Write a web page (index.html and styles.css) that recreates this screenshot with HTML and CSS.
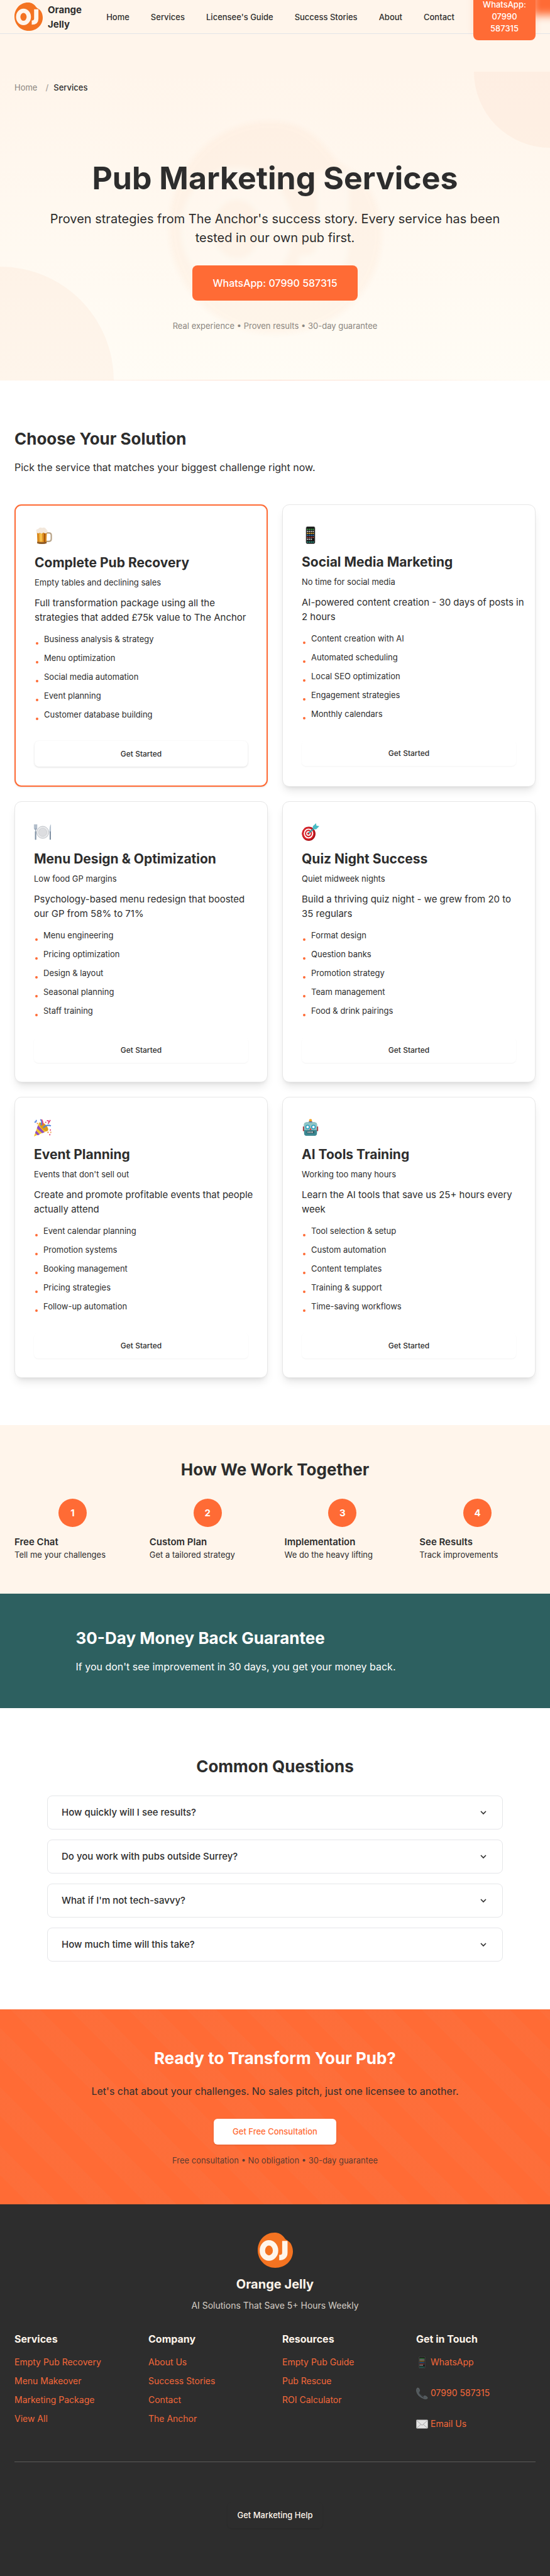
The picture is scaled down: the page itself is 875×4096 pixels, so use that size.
FILE: index.html
```html
<!DOCTYPE html>
<html lang="en">
<head>
<meta charset="utf-8">
<meta name="viewport" content="width=device-width, initial-scale=1">
<title>Pub Marketing Services | Orange Jelly</title>
<link rel="stylesheet" href="styles.css">
</head>
<body>
<svg class="defs" aria-hidden="true" width="0" height="0">
  <symbol id="logo" viewBox="0 0 144 144">
    <path fill="#f47321" d="M68 0C88 0 100 8 112 25C118 32 130 34 137 48C142 58 144 68 144 78C143 116 112 144 72 144C32 144 0 112 0 72C0 32 30 0 68 0Z"/>
    <g fill="none" stroke="#fff5eb" stroke-width="22">
      <ellipse cx="46" cy="73" rx="27" ry="31"/>
      <path stroke="#f47321" stroke-width="30" d="M111 82Q111 102 92 102"/>
      <path stroke-linejoin="round" d="M111 34V82Q111 102 88 102"/>
    </g>
  </symbol>
  <symbol id="phone" viewBox="0 0 30 30">
    <rect x="7.5" y="0.5" width="15" height="29" rx="2.2" fill="#151515" stroke="#666" stroke-width="0.8"/>
    <g stroke-width="2" stroke-dasharray="2 1.2">
      <path stroke="#4fc45c" d="M9 5h12"/><path stroke="#e8e8e8" d="M9 8.4h12"/><path stroke="#f0b43c" d="M9 11.8h12"/>
      <path stroke="#3d8fe0" d="M9 15.2h12"/><path stroke="#d9534f" d="M9 18.6h12"/><path stroke="#ddd" d="M9 22h9"/><path stroke="#2fb7a0" d="M9 26.6h12"/>
    </g>
  </symbol>
</svg>

<header class="header">
  <span class="glow" aria-hidden="true"></span>
  <a class="brand" href="#"><svg class="brand-logo" aria-hidden="true"><use href="#logo"/></svg><span>Orange<br>Jelly</span></a>
  <nav class="nav" aria-label="Main">
    <a href="#">Home</a><a href="#">Services</a><a href="#">Licensee's Guide</a><a href="#">Success Stories</a><a href="#">About</a><a href="#">Contact</a>
  </nav>
  <a class="header-cta" href="#">WhatsApp: 07990 587315</a>
</header>

<main>
<section class="hero">
  <span class="disc disc-right" aria-hidden="true"></span>
  <span class="disc disc-left" aria-hidden="true"></span>
  <svg class="watermark" aria-hidden="true"><use href="#logo"/></svg>
  <nav class="crumbs" aria-label="Breadcrumb"><a href="#">Home</a><span class="slash">/</span><span>Services</span></nav>
  <div class="hero-body">
    <h1>Pub Marketing Services</h1>
    <p class="hero-lead">Proven strategies from The Anchor's success story. Every service has been tested in our own pub first.</p>
    <a class="hero-cta" href="#">WhatsApp: 07990 587315</a>
    <p class="hero-note">Real experience • Proven results • 30-day guarantee</p>
  </div>
</section>

<section class="services">
  <h2>Choose Your Solution</h2>
  <p class="lead">Pick the service that matches your biggest challenge right now.</p>
  <div class="cards">
    <article class="card featured">
      <svg class="emoji" viewBox="0 0 30 30" aria-hidden="true">
        <path d="M20 10h4.500q4 0 4 4v6q0 4-4 4.500H20" fill="none" stroke="#b9a58a" stroke-width="2.400"/>
        <path d="M4 7h17l-.800 20.500q-7.700 2.500-15.400 0Z" fill="#d98a1f"/><path d="M8 11h5l.500 14h-5Z" fill="#f6bf4a"/><path d="M16 10h2.500L18 26h-2Z" fill="#a8570d"/>
        <path d="M4.500 25q8 2 16 0v2.800q-8 2.200-16 0Z" fill="#8a5a2a"/>
        <path d="M3.500 9Q1 4 6 3.500Q9-.500 13 1.500Q18-.500 20 4Q23.500 6 21 10Q18 12 15 9.500Q12 12.500 9 10Q6 12 3.500 9Z" fill="#f3e8dc"/>
      </svg>
      <h3>Complete Pub Recovery</h3>
      <p class="problem">Empty tables and declining sales</p>
      <p class="desc">Full transformation package using all the strategies that added £75k value to The Anchor</p>
      <ul><li>Business analysis &amp; strategy</li><li>Menu optimization</li><li>Social media automation</li><li>Event planning</li><li>Customer database building</li></ul>
      <a class="start" href="#">Get Started</a>
    </article>
    <article class="card">
      <svg class="emoji" aria-hidden="true"><use href="#phone"/></svg>
      <h3>Social Media Marketing</h3>
      <p class="problem">No time for social media</p>
      <p class="desc">AI-powered content creation - 30 days of posts in 2&nbsp;hours</p>
      <ul><li>Content creation with AI</li><li>Automated scheduling</li><li>Local SEO optimization</li><li>Engagement strategies</li><li>Monthly calendars</li></ul>
      <a class="start" href="#">Get Started</a>
    </article>
    <article class="card">
      <svg class="emoji" viewBox="0 0 30 30" aria-hidden="true">
        <circle cx="15" cy="15.500" r="10.300" fill="#e9eaec" stroke="#b9bdc3"/><circle cx="15" cy="15.500" r="7" fill="#dcdde0" stroke="#c3c6ca" stroke-width=".7"/>
        <path d="M.800 2v6q0 2.500 2 2.500t2-2.500V2M2.800 2v26" fill="none" stroke="#8fa0b3" stroke-width="1.300"/><path d="M2.800 14v14" stroke="#7f90a3" stroke-width="2.200"/>
        <path d="M29 1.500q-3 3-2.500 14h2.500Z" fill="#b3c1d0"/><path d="M27.800 14v14" stroke="#7f90a3" stroke-width="2.200"/>
      </svg>
      <h3>Menu Design &amp; Optimization</h3>
      <p class="problem">Low food GP margins</p>
      <p class="desc">Psychology-based menu redesign that boosted our GP from 58% to 71%</p>
      <ul><li>Menu engineering</li><li>Pricing optimization</li><li>Design &amp; layout</li><li>Seasonal planning</li><li>Staff training</li></ul>
      <a class="start" href="#">Get Started</a>
    </article>
    <article class="card">
      <svg class="emoji" viewBox="0 0 30 30" aria-hidden="true">
        <ellipse cx="12" cy="18" rx="11.500" ry="12" fill="#a80f16"/><ellipse cx="11" cy="17.500" rx="10.500" ry="11" fill="#d8232a"/>
        <ellipse cx="11.500" cy="17.500" rx="8" ry="8.500" fill="#fff"/><ellipse cx="11.500" cy="17.500" rx="6" ry="6.500" fill="#d8232a"/><ellipse cx="11.500" cy="17.500" rx="3.800" ry="4" fill="#fff"/><circle cx="11.500" cy="17.500" r="2" fill="#d8232a"/>
        <path d="M12 17L24 6" stroke="#2c98a0" stroke-width="2.200"/><path d="M19 10L19 5L24.500 0L25 4L30 5L24.500 10.500Z" fill="#48bcc4"/>
      </svg>
      <h3>Quiz Night Success</h3>
      <p class="problem">Quiet midweek nights</p>
      <p class="desc">Build a thriving quiz night - we grew from 20 to 35&nbsp;regulars</p>
      <ul><li>Format design</li><li>Question banks</li><li>Promotion strategy</li><li>Team management</li><li>Food &amp; drink pairings</li></ul>
      <a class="start" href="#">Get Started</a>
    </article>
    <article class="card">
      <svg class="emoji" viewBox="0 0 30 30" aria-hidden="true">
        <path d="M0 30L9 6Q19 9 24 20Z" fill="#f2c230"/><path d="M7 11L18 23L14 24.500L5 16ZM3.500 20L10 26.500L6.500 28L2 24Z" fill="#8f4fc0"/>
        <ellipse cx="17" cy="13.500" rx="4.500" ry="9.500" transform="rotate(-45 17 13.500)" fill="#d99b1c"/>
        <path d="M12 11Q15 5 11 1M1 5q3 2 3-3M16 15q6-6 13-3" fill="none" stroke="#4a7fe0" stroke-width="1.900"/>
        <path d="M15 11q1-6-2-10M22 3q5 0 3 4q-2 3 3-5" fill="none" stroke="#e0447c" stroke-width="1.900"/>
        <path d="M19 5h2v2h-2ZM27 18h2v2h-2ZM26 26h2v2h-2Z" fill="#e0447c"/><path d="M23 22h2v2h-2ZM5 7h2v2h-2ZM28 22h1.500v2H28Z" fill="#f08c2e"/>
      </svg>
      <h3>Event Planning</h3>
      <p class="problem">Events that don't sell out</p>
      <p class="desc">Create and promote profitable events that people actually attend</p>
      <ul><li>Event calendar planning</li><li>Promotion systems</li><li>Booking management</li><li>Pricing strategies</li><li>Follow-up automation</li></ul>
      <a class="start" href="#">Get Started</a>
    </article>
    <article class="card">
      <svg class="emoji" viewBox="0 0 30 30" aria-hidden="true">
        <circle cx="15" cy="3" r="2.600" fill="#f5a623"/><rect x="12" y="4.500" width="6" height="3" fill="#4a4f9a"/>
        <path d="M2 13h3v8H2ZM25 13h3v8h-3Z" fill="#b5343a"/><path d="M4 10Q4 6 9 6H21Q26 6 26 10V24Q26 29 21 29H9Q4 29 4 24Z" fill="#3c8791"/><path d="M4 10Q4 6 9 6H21Q26 6 26 10V19H4Z" fill="#8fc4c4"/>
        <circle cx="10" cy="14" r="3.800" fill="#2a9fc0"/><circle cx="20" cy="14" r="3.800" fill="#2a9fc0"/><circle cx="10" cy="14" r="2.200" fill="#fff"/><circle cx="20" cy="14" r="2.200" fill="#fff"/>
        <path d="M15 15l1.800 4h-3.600Z" fill="#d4383e"/><rect x="9" y="21" width="12" height="3.600" fill="#173d46"/><path d="M10 22.800h10" stroke="#fff" stroke-width="2.200" stroke-dasharray="1.600 1"/>
      </svg>
      <h3>AI Tools Training</h3>
      <p class="problem">Working too many hours</p>
      <p class="desc">Learn the AI tools that save us 25+ hours every week</p>
      <ul><li>Tool selection &amp; setup</li><li>Custom automation</li><li>Content templates</li><li>Training &amp; support</li><li>Time-saving workflows</li></ul>
      <a class="start" href="#">Get Started</a>
    </article>
  </div>
</section>

<section class="process">
  <h2>How We Work Together</h2>
  <ol class="steps">
    <li><span class="num">1</span><h3>Free Chat</h3><p>Tell me your challenges</p></li>
    <li><span class="num">2</span><h3>Custom Plan</h3><p>Get a tailored strategy</p></li>
    <li><span class="num">3</span><h3>Implementation</h3><p>We do the heavy lifting</p></li>
    <li><span class="num">4</span><h3>See Results</h3><p>Track improvements</p></li>
  </ol>
</section>

<section class="guarantee">
  <div class="guarantee-body">
    <h2>30-Day Money Back Guarantee</h2>
    <p class="lead">If you don't see improvement in 30 days, you get your money back.</p>
  </div>
</section>

<section class="faq">
  <h2>Common Questions</h2>
  <div class="faq-list">
    <button class="faq-item" type="button">How quickly will I see results?<svg class="chevron" viewBox="0 0 16 16" aria-hidden="true"><path d="M4 6l4 4l4-4"/></svg></button>
    <button class="faq-item" type="button">Do you work with pubs outside Surrey?<svg class="chevron" viewBox="0 0 16 16" aria-hidden="true"><path d="M4 6l4 4l4-4"/></svg></button>
    <button class="faq-item" type="button">What if I'm not tech-savvy?<svg class="chevron" viewBox="0 0 16 16" aria-hidden="true"><path d="M4 6l4 4l4-4"/></svg></button>
    <button class="faq-item" type="button">How much time will this take?<svg class="chevron" viewBox="0 0 16 16" aria-hidden="true"><path d="M4 6l4 4l4-4"/></svg></button>
  </div>
</section>

<section class="cta">
  <h2>Ready to Transform Your Pub?</h2>
  <p class="cta-lead">Let's chat about your challenges. No sales pitch, just one licensee to another.</p>
  <a class="cta-button" href="#">Get Free Consultation</a>
  <p class="cta-note">Free consultation • No obligation • 30-day guarantee</p>
</section>
</main>

<footer class="footer">
  <svg class="footer-logo" aria-hidden="true"><use href="#logo"/></svg>
  <p class="footer-name">Orange Jelly</p>
  <p class="tagline">AI Solutions That Save 5+ Hours Weekly</p>
  <div class="footer-cols">
    <div><h3>Services</h3><ul><li><a href="#">Empty Pub Recovery</a></li><li><a href="#">Menu Makeover</a></li><li><a href="#">Marketing Package</a></li><li><a href="#">View All</a></li></ul></div>
    <div><h3>Company</h3><ul><li><a href="#">About Us</a></li><li><a href="#">Success Stories</a></li><li><a href="#">Contact</a></li><li><a href="#">The Anchor</a></li></ul></div>
    <div><h3>Resources</h3><ul><li><a href="#">Empty Pub Guide</a></li><li><a href="#">Pub Rescue</a></li><li><a href="#">ROI Calculator</a></li></ul></div>
    <div><h3>Get in Touch</h3>
      <ul class="contact">
        <li><a href="#"><svg class="mini" aria-hidden="true"><use href="#phone"/></svg>WhatsApp</a></li>
        <li><a href="#"><svg class="mini" viewBox="0 0 20 20" aria-hidden="true"><path d="M2 1q3-1 4 4q0 2-1.500 3Q7 13 12 15.500q2-2 4-1q4 2 3 4q-2 2-6 .5Q2 15 .5 6Q.3 2 2 1Z" fill="#51585c" stroke="#707679" stroke-width=".6"/><path d="M5 9Q8 14 12.500 16.500" fill="none" stroke="#1f2224" stroke-width="1"/></svg>07990 587315</a></li>
        <li><a href="#"><svg class="mini" viewBox="0 0 20 20" aria-hidden="true"><rect x=".5" y="3" width="19" height="14" rx="1" fill="#e4e4e4" stroke="#bbb" stroke-width=".6"/><path d="M1 4l9 8l9-8M1 16.500l7-6M19 16.500l-7-6" fill="none" stroke="#a3a3a3"/></svg>Email Us</a></li>
      </ul>
    </div>
  </div>
  <div class="footer-end"><a class="help" href="#">Get Marketing Help</a></div>
</footer>
</body>
</html>
```
FILE: styles.css
```css
* { box-sizing: border-box; }
body {
  margin: 0;
  background: #fff5eb;
  color: #2d2d2d;
  font-family: Inter, "Liberation Sans", sans-serif;
  font-size: 15px;
}
h1, h2, h3, p, ul, ol { margin: 0; padding: 0; }
ul, ol { list-style: none; }
a { color: inherit; text-decoration: none; }
h2 { font-size: 26px; line-height: 34px; font-weight: 700; }
.defs { position: absolute; }
.lead { font-size: 16px; line-height: 28px; margin-top: 14px; }

.header {
  position: relative;
  z-index: 2;
  display: flex;
  align-items: center;
  height: 54px;
  padding: 0 23px;
  border-bottom: 1px solid #e2e4e8;
}
.glow {
  position: absolute;
  top: 0;
  right: 0;
  width: 40px;
  height: 46px;
  overflow: hidden;
}
.glow::before {
  content: "";
  position: absolute;
  inset: -60px -50px 22px 12px;
  background: #ff6b35;
  filter: blur(7px);
}
.brand {
  display: flex;
  align-items: center;
  gap: 8px;
  font-size: 15px;
  line-height: 23px;
  font-weight: 700;
}
.brand-logo { width: 45px; height: 45px; }
.nav {
  display: flex;
  gap: 34px;
  margin-left: auto;
  font-size: 13px;
  font-weight: 500;
  white-space: nowrap;
}
.header-cta {
  position: relative;
  width: 99px;
  margin-left: 30px;
  padding: 9px 15px;
  border-radius: 8px;
  background: #ff6b35;
  box-shadow: 0 -10px 12px rgba(255, 107, 53, 0.16);
  color: #fff;
  font-size: 13px;
  line-height: 19px;
  font-weight: 500;
  text-align: center;
}

.hero {
  position: relative;
  overflow: hidden;
  margin-top: 60px;
  padding: 15px 23px 77px;
  background: linear-gradient(#fff5eb, #fffcf5);
}
.hero::after {
  content: "";
  position: absolute;
  inset: auto 0 0;
  height: 1px;
  background: linear-gradient(90deg, transparent, #fddccb, transparent);
}
.disc { position: absolute; border-radius: 50%; background: rgba(240, 110, 50, 0.05); }
.disc-right { top: -121px; right: -121px; width: 242px; height: 242px; }
.disc-left { bottom: -181px; left: -181px; width: 362px; height: 362px; }
.watermark {
  position: absolute;
  top: 79px;
  left: 50%;
  width: 338px;
  height: 338px;
  margin-left: -169px;
  opacity: 0.04;
  filter: blur(4px);
}
.crumbs { position: relative; display: flex; gap: 8px; font-size: 13px; line-height: 20px; font-weight: 500; }
.crumbs a { color: #8b8680; font-weight: 400; }
.slash { color: #a9a39d; padding-left: 5px; }
.hero-body {
  position: relative;
  display: flex;
  flex-direction: column;
  align-items: center;
  margin-top: 102px;
  text-align: center;
}
h1 { font-size: 50px; line-height: 64px; font-weight: 700; }
.hero-lead { max-width: 725px; margin-top: 18px; font-size: 20px; line-height: 30px; }
.hero-cta {
  margin-top: 29px;
  padding: 14px 32px;
  border-radius: 8px;
  background: #ff6b35;
  color: #fff;
  font-size: 16px;
  line-height: 28px;
  font-weight: 500;
}
.hero-note { margin-top: 30px; color: #8b8680; font-size: 13px; line-height: 20px; }

.services { padding: 76px 23px 75px; background: #fff; }
.cards { display: grid; grid-template-columns: 1fr 1fr; gap: 23px; margin-top: 45px; }
.card {
  display: flex;
  flex-direction: column;
  padding: 30px;
  border: 1px solid #e7e7e7;
  border-radius: 11px;
  background: #fff;
  box-shadow: 0 9px 14px -3px rgba(0, 0, 0, 0.1), 0 4px 6px -4px rgba(0, 0, 0, 0.1);
}
.featured { border: 2px solid #ff6b35; box-shadow: 0 1px 3px rgba(0, 0, 0, 0.1); }
.emoji { width: 28px; height: 28px; margin: 4px 0 5px; }
.card h3 { margin-top: 9px; font-size: 21px; line-height: 30px; font-weight: 700; }
.problem { margin-top: 6px; font-size: 13px; line-height: 20px; }
.desc { margin: 11px -16px 0 0; line-height: 23px; }
.card ul { display: grid; gap: 10px; margin-top: 13px; font-size: 13px; line-height: 20px; }
.card li { display: flex; align-items: flex-end; gap: 10px; }
.card li::before {
  content: "";
  width: 4px;
  height: 4px;
  margin: 0 -1px 1px 2px;
  border-radius: 50%;
  background: #ff6b35;
}
.start {
  margin-top: 32px;
  padding: 11px;
  border-radius: 7px;
  box-shadow: 0 1px 2px rgba(0, 0, 0, 0.05);
  font-size: 12px;
  line-height: 19px;
  font-weight: 500;
  text-align: center;
}
.featured .start { box-shadow: 0 1px 3px rgba(0, 0, 0, 0.14); }

.process { padding: 54px 23px 52px; }
.process h2, .faq h2, .cta h2 { text-align: center; }
.steps { display: grid; grid-template-columns: repeat(4, 1fr); gap: 30px; margin-top: 29px; }
.num {
  display: grid;
  place-items: center;
  width: 45px;
  height: 45px;
  margin: 0 auto 12px;
  border-radius: 50%;
  background: #ff6b35;
  color: #fff;
  font-weight: 700;
}
.steps h3 { font-size: 15px; line-height: 23px; font-weight: 600; }
.steps p { font-size: 13px; line-height: 19px; }

.guarantee { padding: 54px 23px 52px; background: #2d6060; color: #fff; }
.guarantee-body { max-width: 634px; margin: 0 auto; }

.faq { padding: 76px 23px; background: #fff; }
.faq-list { display: grid; gap: 16px; max-width: 725px; margin: 29px auto 0; }
.faq-item {
  display: flex;
  align-items: center;
  justify-content: space-between;
  padding: 14px 22px;
  border: 1px solid #e5e6e9;
  border-radius: 8px;
  background: #fff;
  color: inherit;
  font: 500 15px/24px Inter, "Liberation Sans", sans-serif;
  text-align: left;
}
.chevron { width: 16px; height: 16px; fill: none; stroke: #2d2d2d; stroke-width: 1.6; }

.cta {
  padding: 61px 23px 60px;
  background: repeating-linear-gradient(45deg, transparent 0 33px, rgba(200, 200, 200, 0.03) 33px 66px), #ff6b35;
  text-align: center;
}
.cta h2 { color: #fff; }
.cta-lead { margin: 21px 0 30px; font-size: 16px; line-height: 28px; }
.cta-button {
  display: inline-block;
  padding: 11px 30px;
  border-radius: 6px;
  background: #fff;
  box-shadow: 0 1px 3px rgba(0, 0, 0, 0.12);
  color: #ff6b35;
  font-size: 13px;
  line-height: 19px;
  font-weight: 500;
}
.cta-note { margin-top: 15px; color: rgba(45, 45, 45, 0.8); font-size: 13px; line-height: 20px; }

.footer { padding: 45px 23px 76px; background: #2d2d2d; color: #fff5eb; }
.footer-logo { display: block; width: 56px; height: 56px; margin: 0 auto; }
.footer-name { margin-top: 10px; font-size: 20px; line-height: 32px; font-weight: 700; text-align: center; }
.tagline { margin-top: 6px; color: rgba(255, 245, 235, 0.8); font-size: 14px; line-height: 23px; text-align: center; }
.footer-cols { display: grid; grid-template-columns: repeat(4, 1fr); gap: 23px; margin-top: 29px; }
.footer-cols h3 { font-size: 16px; line-height: 26px; font-weight: 700; }
.footer-cols ul { display: grid; gap: 8px; margin-top: 13px; color: #f4683a; font-size: 14px; line-height: 22px; }
.footer-cols .contact { gap: 27px; }
.contact a { display: flex; align-items: center; gap: 4px; }
.mini { width: 19px; height: 19px; }
.footer-end { margin-top: 49px; padding-top: 64px; border-top: 1px solid #5c5a58; text-align: center; }
.help {
  display: inline-block;
  padding: 11px 15px;
  border-radius: 6px;
  box-shadow: 0 1px 2px rgba(0, 0, 0, 0.1);
  font-size: 13px;
  line-height: 19px;
  font-weight: 500;
}
```
